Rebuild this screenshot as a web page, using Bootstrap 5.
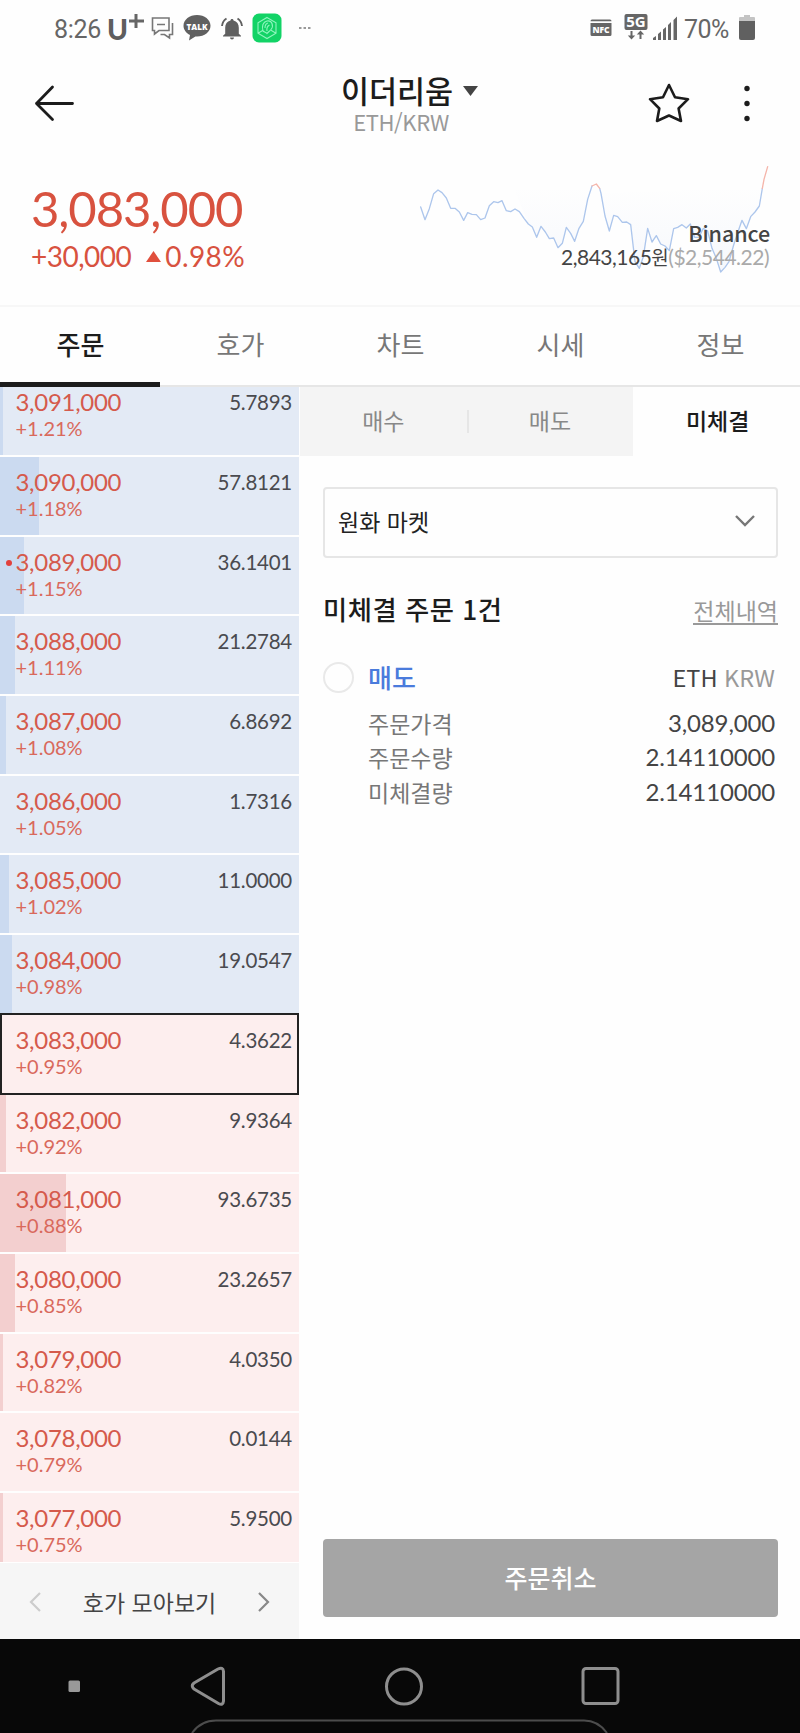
<!DOCTYPE html>
<html lang="ko">
<head>
<meta charset="utf-8">
<meta name="viewport" content="width=device-width, initial-scale=1">
<title>이더리움 ETH/KRW</title>
<link href="https://cdn.jsdelivr.net/npm/bootstrap@5.3.0/dist/css/bootstrap.min.css" rel="stylesheet">
<style>
  body { font-family: Lato, "Noto Sans CJK KR", sans-serif; color: #222; background: #fefefe; width: 800px; }
  .ko { font-family: "Noto Sans CJK KR", sans-serif; }
  .screen { height: 1733px; overflow: hidden; }
  svg { display: block; flex: none; }

  /* status bar */
  .status { height: 56px; padding: 0 45px 1px 54px; color: #666; font: 25px/30px Roboto, sans-serif; }
  .status .clock { width: 54px; padding-top: 4px; letter-spacing: -.3px; }
  .status .charge { width: 55px; padding-top: 4px; letter-spacing: -.6px; }

  /* title bar */
  .titlebar { height: 94px; padding: 0 34px 0 34px; }
  .titlebar h1 { font-size: 30.5px; line-height: 36px; font-weight: 500; margin: 0; color: #1c1c1c; }
  .titlebar .pair { font-size: 22px; line-height: 26px; color: #999; letter-spacing: -.4px; }
  .side { width: 150px; }

  /* ticker */
  .ticker { height: 157px; border-bottom: 2px solid #f7f7f7; color: #d8523f; padding: 29px 30px 0 31px; }
  .ticker .last { font-size: 49px; line-height: 58px; letter-spacing: -1.1px; }
  .ticker .diff { font-size: 28px; line-height: 34px; margin-top: 2px; }
  .spark { left: 400px; top: 0; }
  .foreign { line-height: 24px; margin-top: 42px; }
  .foreign .market { font-size: 21.5px; font-weight: 500; color: #444; letter-spacing: -.1px; }
  .foreign .quote { font-size: 21px; color: #444; letter-spacing: -.5px; padding-right: 1px; }
  .foreign .usd { color: #aaa; }

  /* main tabs */
  .maintabs { height: 80px; border-bottom: 2px solid #e6e6e6; }
  .maintabs .nav-link { width: 160px; height: 80px; padding: 0 0 0 1px; border-radius: 0; font-size: 26px; line-height: 73px; text-align: center; color: #777; }
  .maintabs .nav-link.active { color: #1c1c1c; font-weight: 500; border-bottom: 5px solid #1c1c1c; }

  /* order book */
  .book { width: 299px; height: 1252px; }
  .levels { height: 1175px; overflow: hidden; }
  .levels ul { margin: -9.65px 0 0; }
  .level { position: relative; height: 77.7px; margin-bottom: 2px; padding: 11px 7px 0 15.500px; background: #e3eaf5; }
  .level.bid { background: #fdeeee; }
  .level .depth { position: absolute; left: 0; top: 0; bottom: 0; background: #cbdaf0; }
  .level.bid .depth { background: #f3cfcf; }
  .level .px, .level .rate, .level .qty { position: relative; }
  .level .px { font-size: 24px; line-height: 28px; color: #d55a4c; letter-spacing: -.3px; }
  .level .rate { font-size: 20px; line-height: 25px; color: #d9695c; }
  .level .qty { font-size: 20.5px; line-height: 28px; color: #4a4a4f; letter-spacing: -.25px; }
  .level.now::after { content: ""; position: absolute; inset: -2px 0 -2px 0; border: 2px solid #222; z-index: 1; }
  .mine { position: absolute; left: 6px; top: 23px; width: 6px; height: 6px; border-radius: 50%; background: #e2403c; }
  .group { height: 77px; background: #f6f6f6; border-top: 1px solid #fff; padding: 2px 29px 0; font-size: 23px; color: #444; }

  /* order panel */
  .panel { width: 500px; height: 1252px; }
  .subtabs .nav-link { width: 33.333%; height: 69px; padding: 0; border-radius: 0; background: #f4f4f4; font-size: 23px; line-height: 67px; color: #888; text-align: center; }
  .subtabs .nav-link.active { background: #fefefe; color: #1c1c1c; font-weight: 500; padding-left: 2px; }
  .subtabs .split { border-left: 2px solid #e6e6e6; height: 23px; left: 167px; top: 23px; }
  .panel-body { padding: 31px 22px 22px 23px; }
  .pick { height: 71px; border: 2px solid #e6e6e6; border-radius: 4px; padding: 0 21px 3px 13px; font-size: 23px; }
  .headline { font-size: 26.3px; font-weight: 500; color: #1c1c1c; line-height: 34px; letter-spacing: .5px; }
  .all { font-size: 23px; line-height: 36px; color: #999; text-decoration: none; }
  .all span { display: inline-block; line-height: 26px; border-bottom: 2px solid #999; }
  .tick { width: 31px; height: 31px; border: 2px solid #e9e9e9; border-radius: 50%; margin-right: 14px; }
  .sell { font-size: 26px; font-weight: 500; line-height: 36px; color: #4a7bdc; }
  .coin { font-size: 23.5px; line-height: 34px; color: #444; }
  .coin span { color: #999; }
  .facts { padding: 0 3px 0 45px; font-size: 23px; line-height: 34.3px; margin-top: 11px; }
  .facts dt { font-weight: 400; color: #777; }
  .facts dd { margin: 0; font-family: Lato, sans-serif; font-size: 24px; color: #444; letter-spacing: -.15px; }
  .cancel { height: 78px; background: #a5a5a5 !important; color: #fff; border: 0; border-radius: 4px; font-size: 25px; font-weight: 500; }

  .softkeys { height: 94px; background: #080808; }
</style>
</head>
<body>
<div class="screen d-flex flex-column">

  <div class="status d-flex align-items-center">
    <span class="clock">8:26</span>
    <svg width="37" height="40" viewBox="0 0 37 40"><text x="-1" y="31.500" font-family="Lato" font-weight="900" font-size="28" fill="#5e5e5e" textLength="21" lengthAdjust="spacingAndGlyphs">U</text><path d="M28 6v14M21 13h15" stroke="#666" stroke-width="3"/></svg>
    <svg style="margin-left:5px" width="26" height="24" viewBox="0 0 26 24" fill="none" stroke="#777" stroke-width="1.6"><path d="M2.500 2H19v12.500H9l-4.500 3.500v-3.500h-2zM7 8.500h8M22.500 7v11.500h-3v3.500l-5-3.500H10.500"/></svg>
    <svg style="margin-left:7px" width="28" height="27" viewBox="0 0 28 27"><path fill="#606060" d="M14 1c7.500 0 13.500 4.700 13.500 10.800S21.500 22.500 14 22.500l-1.600-.1L6 26.500l1-5.500C3 19 .5 15.700.5 11.800.5 5.700 6.500 1 14 1z"/><text x="14" y="15.500" text-anchor="middle" font-family="Open Sans" font-weight="800" font-size="9.500" fill="#fff" textLength="21" lengthAdjust="spacingAndGlyphs">TALK</text></svg>
    <svg style="margin-left:9px" width="24" height="24" viewBox="0 0 24 24"><path fill="#606060" d="M12 3c1 0 1.500.7 1.500 1.500 3.500.8 5.300 3.600 5.300 7.200v6l2.200 2.100v.8H3v-.8l2.200-2.100v-6c0-3.600 1.800-6.400 5.300-7.200C10.500 3.700 11 3 12 3zM10 21.500h4a2 2 0 0 1-4 0z"/><path d="M6.500 2.500Q2.500 5 2 10M17.500 2.500Q21.500 5 22 10" fill="none" stroke="#606060" stroke-width="1.900"/></svg>
    <svg style="margin-left:8px" width="30" height="30" viewBox="0 0 30 30"><rect x=".5" y=".5" width="29" height="29" rx="6.500" fill="#12d366"/><g fill="none" stroke="#8ff5be" stroke-width="1.100"><path d="M15 4.500l9 5.200v10.600l-9 5.200-9-5.200V9.700zM6 20.300l5-3M24 20.300l-5-3"/><path d="M11 18c-1.500-5 0-9 4-10 5-1 7 5 4 8.500-1.500 2-3 2.500-4 4-1-1.500-3-1.500-4-2.500zM13 15c0-3 1-4.500 3-5M15 18c-.5-3 .5-5 2.500-6"/></g></svg>
    <svg style="margin-left:17px" width="12" height="4" viewBox="0 0 12 4" fill="#999"><path d="M0 1h2.500v2H0zM4.500 1H7v2H4.500zM9 1h2.500v2H9z"/></svg>

    <svg class="ms-auto" width="22" height="20" viewBox="0 0 22 20"><path fill="#666" d="M2 1.500h18q1.500 0 1.500 1.700H.5Q.5 1.500 2 1.500zM.5 5h21v11.500q0 1.500-1.500 1.500H2q-1.500 0-1.500-1.500z"/><text x="11" y="14.800" text-anchor="middle" font-family="Open Sans" font-weight="800" font-size="8.500" fill="#fff" textLength="17">NFC</text></svg>
    <svg style="margin-left:12px;margin-top:-2px" width="24" height="28" viewBox="0 0 24 28"><rect x=".5" y="1" width="23" height="16" rx="2" fill="#666"/><text x="12" y="14.300" text-anchor="middle" font-family="Open Sans" font-weight="700" font-size="15" fill="#fff">5G</text><path d="M7.500 18v6M16.500 26v-6" stroke="#666" stroke-width="2"/><path fill="#666" d="M3.800 22.500h7.400l-3.700 4zM12.800 21.500h7.400l-3.700-4z"/></svg>
    <svg style="margin-left:4px" width="26" height="24" viewBox="0 0 26 24"><path fill="#666" d="M1 24v-2l3-2v4zM6 24v-6l3-2.500V24zM11 24V13.500l3-2.500v13zM16 24V9l3-3v18zM21.500 24V4L25 .5V24z"/></svg>
    <span class="charge" style="margin-left:6px">70%</span>
    <svg width="16" height="26" viewBox="0 0 16 26"><path fill="#c4c4c4" d="M5 0h6v2h4q1 0 1 1v4H0V3q0-1 1-1h4z"/><path fill="#606060" d="M0 6h16v17q0 2-2 2H2q-2 0-2-2z"/></svg>
  </div>

  <header class="titlebar d-flex justify-content-between">
    <div class="side"><svg style="margin-top:26px" width="42" height="42" viewBox="0 0 42 42" fill="none" stroke="#1c1c1c" stroke-width="2.800" stroke-linecap="round" stroke-linejoin="round"><path d="M38.500 21.500H2.500M18.500 5L2.500 21.500l16 16"/></svg></div>
    <div class="text-center ko" style="padding-top:16px">
      <h1 class="d-flex align-items-center justify-content-center"><span style="padding-left:19px">이더리움</span><svg style="margin-left:10px;margin-top:2px" width="15" height="10" viewBox="0 0 15 10"><path d="M0 0h15L7.500 10z" fill="#444"/></svg></h1>
      <div class="pair" style="padding-left:2px">ETH/KRW</div>
    </div>
    <div class="side d-flex justify-content-end" style="padding-top:26px;padding-right:14px">
      <svg width="42" height="42" viewBox="0 0 42 42" fill="none" stroke="#1c1c1c" stroke-width="2.600" stroke-linejoin="round"><path d="M21 3l6 12.300 13 1.900-9.400 9.300L33 39l-12-5.500L9 39l2.300-12.500L2 17.200l13-1.900z"/></svg>
      <svg style="margin-left:52px" width="10" height="42" viewBox="0 0 10 42" fill="#1c1c1c" ><circle cx="5" cy="6.500" r="2.700"/><circle cx="5" cy="21.500" r="2.700"/><circle cx="5" cy="36.500" r="2.700"/></svg>
    </div>
  </header>

  <section class="ticker position-relative d-flex justify-content-between">
    <svg class="spark position-absolute" width="400" height="150" viewBox="0 0 1200 450" fill="none" stroke-width="4" stroke-linejoin="round" stroke-linecap="round">
      <defs><linearGradient id="haze" x1="0" y1="0" x2="0" y2="1"><stop offset="0" stop-color="#7a9be0" stop-opacity="0"/><stop offset="1" stop-color="#7a9be0" stop-opacity=".06"/></linearGradient></defs>
      <path fill="url(#haze)" d="M340 110L385 222 397 231 410 262 423 229 448 266 461 264 474 293 487 280 499 232 524 274 537 235 550 214 565 140V110zM603 130L615 198 628 243 641 196 653 200 667 217 680 216 692 224 705 335 718 355 730 320 743 235 756 276 769 257 782 282 795 288 808 302 821 236 846 224 859 234 871 222 884 262 897 262 923 243 936 295 962 366 987 335 1001 285 1026 211 1039 236 1052 200 1078 168 1087 112z"/>
      <path stroke="#adc6ec" d="M62 171L75 209 88 176 101 131 114 120 126 128 139 144 152 175 165 175 178 186 191 211 203 188 216 193 229 194 242 209 255 204 268 167 281 155 294 158 306 152 319 182 332 185 345 177 358 185 372 205 385 222 397 231 410 262 423 229 436 246 448 266 461 264 474 293 487 280 499 232 512 250 524 274 537 235 550 214 563 148 576 108M599 115L603 130 615 198 628 243 641 196 653 200 667 217 680 216 692 224 705 335 718 355 730 320 743 235 756 276 769 257 782 282 795 288 808 302 821 236 833 232 846 224 859 234 871 222 884 262 897 262 910 235 923 243 936 295 949 325 962 366 975 352 987 335 1001 285 1014 245 1026 211 1039 236 1052 200 1065 186 1078 168 1087 115"/>
      <path stroke="#f5b5aa" d="M576 108L589 102 599 115M1087 115L1092 88 1103 50"/>
    </svg>
    <div class="position-relative">
      <div class="last">3,083,000</div>
      <div class="diff d-flex align-items-center"><span style="letter-spacing:-.5px">+30,000</span><svg style="margin:0 4px 0 15px" width="15" height="11" viewBox="0 0 15 11"><path d="M0 11L7.500 0 15 11z" fill="#e04f3d"/></svg><span style="letter-spacing:.4px">0.98%</span></div>
    </div>
    <div class="foreign position-relative text-end">
      <div class="market ko">Binance</div>
      <div class="quote">2,843,165<span class="ko" style="font-size:19px">원</span><span class="usd">($2,544.22)</span></div>
    </div>
  </section>

  <nav class="maintabs nav ko flex-nowrap">
    <a class="nav-link active" href="#">주문</a>
    <a class="nav-link" href="#">호가</a>
    <a class="nav-link" href="#">차트</a>
    <a class="nav-link" href="#">시세</a>
    <a class="nav-link" href="#">정보</a>
  </nav>

  <main class="d-flex justify-content-between">
    <section class="book">
      <div class="levels">
        <ul class="list-unstyled">
          <li class="level d-flex justify-content-between"><i class="depth" style="width:3px"></i><div><div class="px">3,091,000</div><div class="rate">+1.21%</div></div><div class="qty">5.7893</div></li>
          <li class="level d-flex justify-content-between"><i class="depth" style="width:39px"></i><div><div class="px">3,090,000</div><div class="rate">+1.18%</div></div><div class="qty">57.8121</div></li>
          <li class="level d-flex justify-content-between"><i class="depth" style="width:24px"></i><i class="mine"></i><div><div class="px">3,089,000</div><div class="rate">+1.15%</div></div><div class="qty">36.1401</div></li>
          <li class="level d-flex justify-content-between"><i class="depth" style="width:15px"></i><div><div class="px">3,088,000</div><div class="rate">+1.11%</div></div><div class="qty">21.2784</div></li>
          <li class="level d-flex justify-content-between"><i class="depth" style="width:6px"></i><div><div class="px">3,087,000</div><div class="rate">+1.08%</div></div><div class="qty">6.8692</div></li>
          <li class="level d-flex justify-content-between"><i class="depth" style="width:0"></i><div><div class="px">3,086,000</div><div class="rate">+1.05%</div></div><div class="qty">1.7316</div></li>
          <li class="level d-flex justify-content-between"><i class="depth" style="width:9px"></i><div><div class="px">3,085,000</div><div class="rate">+1.02%</div></div><div class="qty">11.0000</div></li>
          <li class="level d-flex justify-content-between"><i class="depth" style="width:12px"></i><div><div class="px">3,084,000</div><div class="rate">+0.98%</div></div><div class="qty">19.0547</div></li>
          <li class="level bid now d-flex justify-content-between"><i class="depth" style="width:0"></i><div><div class="px">3,083,000</div><div class="rate">+0.95%</div></div><div class="qty">4.3622</div></li>
          <li class="level bid d-flex justify-content-between"><i class="depth" style="width:6px"></i><div><div class="px">3,082,000</div><div class="rate">+0.92%</div></div><div class="qty">9.9364</div></li>
          <li class="level bid d-flex justify-content-between"><i class="depth" style="width:66px"></i><div><div class="px">3,081,000</div><div class="rate">+0.88%</div></div><div class="qty">93.6735</div></li>
          <li class="level bid d-flex justify-content-between"><i class="depth" style="width:15px"></i><div><div class="px">3,080,000</div><div class="rate">+0.85%</div></div><div class="qty">23.2657</div></li>
          <li class="level bid d-flex justify-content-between"><i class="depth" style="width:3px"></i><div><div class="px">3,079,000</div><div class="rate">+0.82%</div></div><div class="qty">4.0350</div></li>
          <li class="level bid d-flex justify-content-between"><i class="depth" style="width:0"></i><div><div class="px">3,078,000</div><div class="rate">+0.79%</div></div><div class="qty">0.0144</div></li>
          <li class="level bid d-flex justify-content-between"><i class="depth" style="width:3px"></i><div><div class="px">3,077,000</div><div class="rate">+0.75%</div></div><div class="qty">5.9500</div></li>
        </ul>
      </div>
      <div class="group ko d-flex align-items-center justify-content-between">
        <svg width="12" height="20" viewBox="0 0 12 20" fill="none" stroke="#ccc" stroke-width="2.200"><path d="M11 1L2 10l9 9"/></svg>
        <span>호가 모아보기</span>
        <svg width="12" height="20" viewBox="0 0 12 20" fill="none" stroke="#888" stroke-width="2.200"><path d="M1 1l9 9-9 9"/></svg>
      </div>
    </section>

    <section class="panel ko d-flex flex-column">
      <nav class="subtabs nav position-relative flex-nowrap">
        <a class="nav-link" href="#">매수</a>
        <a class="nav-link" href="#">매도</a>
        <a class="nav-link active" href="#">미체결</a>
        <i class="split position-absolute"></i>
      </nav>
      <div class="panel-body d-flex flex-column flex-grow-1">
        <div class="pick d-flex align-items-center justify-content-between"><span>원화 마켓</span>
          <svg width="20" height="12" viewBox="0 0 20 12" fill="none" stroke="#777" stroke-width="2.400"><path d="M1 1l9 9 9-9"/></svg>
        </div>
        <div class="d-flex justify-content-between" style="margin-top:34px">
          <div class="headline">미체결 주문 1건</div>
          <a class="all" href="#"><span>전체내역</span></a>
        </div>
        <div class="d-flex align-items-center" style="margin-top:31px">
          <i class="tick"></i><span class="sell">매도</span>
          <span class="coin ms-auto" style="padding-right:3px">ETH <span>KRW</span></span>
        </div>
        <dl class="facts">
          <div class="d-flex justify-content-between"><dt>주문가격</dt><dd>3,089,000</dd></div>
          <div class="d-flex justify-content-between"><dt>주문수량</dt><dd>2.14110000</dd></div>
          <div class="d-flex justify-content-between"><dt>미체결량</dt><dd>2.14110000</dd></div>
        </dl>
        <button class="cancel btn w-100 mt-auto ko" type="button">주문취소</button>
      </div>
    </section>
  </main>

  <footer class="softkeys">
    <svg width="800" height="94" viewBox="0 0 800 94" fill="none" stroke="#8e8e8e" stroke-width="3" stroke-linejoin="round">
      <rect x="68.500" y="41.500" width="11.500" height="11.500" rx="1.500" fill="#999" stroke="none"/>
      <path d="M218 30q5-2.500 5.500 2.500v29.500q-.5 5-5 2.500L194 50q-3.500-3 0-6z"/>
      <circle cx="404" cy="47.500" r="17.500"/>
      <rect x="583" y="29.500" width="35" height="35" rx="3"/>
      <path d="M192 94q9-12.500 24-12.500H584q14 0 23 12.500" stroke="#4c4c4c" stroke-width="2"/>
    </svg>
  </footer>
</div>
<script src="https://cdn.jsdelivr.net/npm/bootstrap@5.3.0/dist/js/bootstrap.bundle.min.js"></script>
</body>
</html>
